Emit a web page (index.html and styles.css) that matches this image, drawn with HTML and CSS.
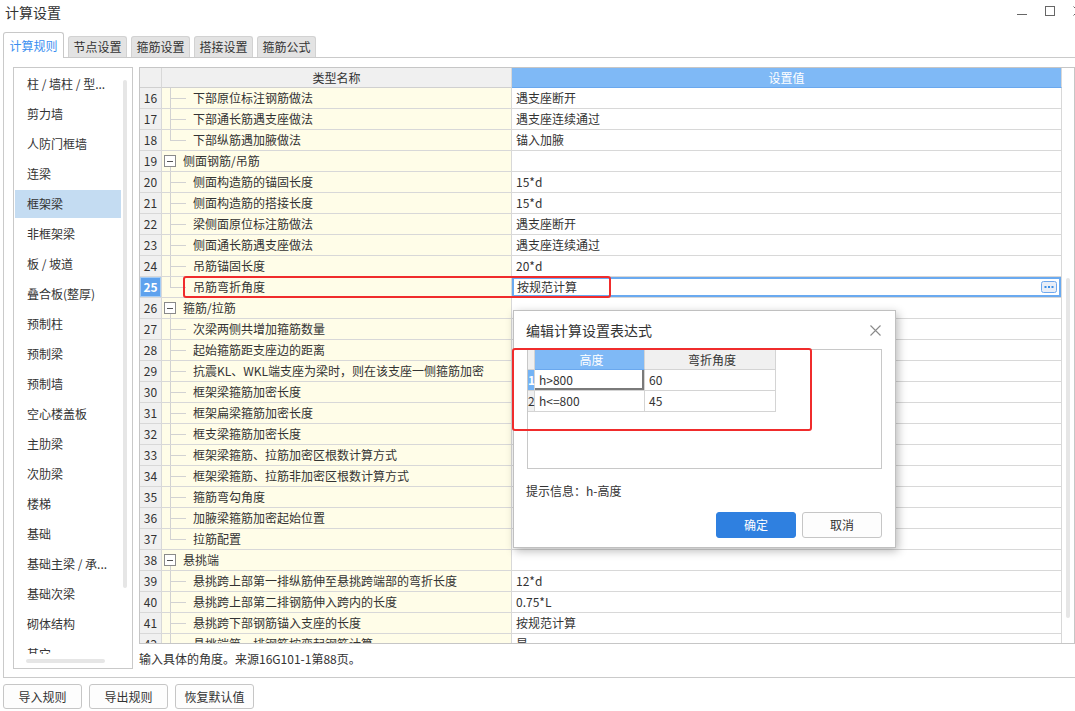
FILE: index.html
```html
<!DOCTYPE html>
<html lang="zh-CN">
<head>
<meta charset="utf-8">
<title>计算设置</title>
<link rel="stylesheet" href="styles.css">
</head>
<body>
<div class="app">
  <header class="titlebar">
    <span class="title">计算设置</span>
    <div class="winctl">
      <svg viewBox="0 0 10 10"><path d="M0 8.5H10" stroke="#666" stroke-width="1"/></svg>
      <svg viewBox="0 0 10 10"><rect x="0.5" y="0.5" width="9" height="9" fill="none" stroke="#666" stroke-width="1"/></svg>
      <svg viewBox="0 0 10 10"><path d="M0.5 0.5L9.5 9.5M9.5 0.5L0.5 9.5" stroke="#666" stroke-width="1"/></svg>
    </div>
  </header>

  <nav class="tabs">
    <div class="tab active">计算规则</div>
    <div class="tab">节点设置</div>
    <div class="tab">箍筋设置</div>
    <div class="tab">搭接设置</div>
    <div class="tab">箍筋公式</div>
  </nav>

  <main class="panel">
    <aside class="side">
      <div class="side-top">
        <ul class="side-list">
          <li>柱 / 墙柱 / 型...</li>
          <li>剪力墙</li>
          <li>人防门框墙</li>
          <li>连梁</li>
          <li class="sel">框架梁</li>
          <li>非框架梁</li>
          <li>板 / 坡道</li>
          <li>叠合板(整厚)</li>
          <li>预制柱</li>
          <li>预制梁</li>
          <li>预制墙</li>
          <li>空心楼盖板</li>
          <li>主肋梁</li>
          <li>次肋梁</li>
          <li>楼梯</li>
          <li>基础</li>
          <li>基础主梁 / 承...</li>
          <li>基础次梁</li>
          <li>砌体结构</li>
          <li>其它</li>
        </ul>
        <div class="side-vscroll"><div class="thumb-v"></div></div>
      </div>
      <div class="side-hscroll"><div class="thumb-h"></div></div>
    </aside>

    <section class="content">
      <div class="grid">
        <div class="gmain">
          <div class="row head">
            <div class="num"></div>
            <div class="name hcell">类型名称</div>
            <div class="val hcell hblue">设置值</div>
          </div>
          <div class="row"><div class="num">16</div><div class="name"><span class="tree"></span>下部原位标注钢筋做法</div><div class="val">遇支座断开</div></div>
          <div class="row"><div class="num">17</div><div class="name"><span class="tree"></span>下部通长筋遇支座做法</div><div class="val">遇支座连续通过</div></div>
          <div class="row"><div class="num">18</div><div class="name"><span class="tree last"></span>下部纵筋遇加腋做法</div><div class="val">锚入加腋</div></div>
          <div class="row"><div class="num">19</div><div class="name"><span class="tree group"><span class="box"></span></span>侧面钢筋/吊筋</div><div class="val"></div></div>
          <div class="row"><div class="num">20</div><div class="name"><span class="tree"></span>侧面构造筋的锚固长度</div><div class="val">15*d</div></div>
          <div class="row"><div class="num">21</div><div class="name"><span class="tree"></span>侧面构造筋的搭接长度</div><div class="val">15*d</div></div>
          <div class="row"><div class="num">22</div><div class="name"><span class="tree"></span>梁侧面原位标注筋做法</div><div class="val">遇支座断开</div></div>
          <div class="row"><div class="num">23</div><div class="name"><span class="tree"></span>侧面通长筋遇支座做法</div><div class="val">遇支座连续通过</div></div>
          <div class="row"><div class="num">24</div><div class="name"><span class="tree"></span>吊筋锚固长度</div><div class="val">20*d</div></div>
          <div class="row"><div class="num cur">25</div><div class="name"><span class="tree last"></span>吊筋弯折角度</div><div class="val editing"><span>按规范计算</span><span class="more"><svg viewBox="0 0 16 12"><rect x="0.5" y="0.5" width="15" height="11" rx="2" fill="#e9eef7" stroke="#6ea8ee"/><rect x="3.5" y="5" width="2" height="2" fill="#3a8ee6"/><rect x="7" y="5" width="2" height="2" fill="#3a8ee6"/><rect x="10.5" y="5" width="2" height="2" fill="#3a8ee6"/></svg></span></div></div>
          <div class="row"><div class="num">26</div><div class="name"><span class="tree group"><span class="box"></span></span>箍筋/拉筋</div><div class="val"></div></div>
          <div class="row"><div class="num">27</div><div class="name"><span class="tree"></span>次梁两侧共增加箍筋数量</div><div class="val"></div></div>
          <div class="row"><div class="num">28</div><div class="name"><span class="tree"></span>起始箍筋距支座边的距离</div><div class="val"></div></div>
          <div class="row"><div class="num">29</div><div class="name"><span class="tree"></span>抗震KL、WKL端支座为梁时，则在该支座一侧箍筋加密</div><div class="val"></div></div>
          <div class="row"><div class="num">30</div><div class="name"><span class="tree"></span>框架梁箍筋加密长度</div><div class="val"></div></div>
          <div class="row"><div class="num">31</div><div class="name"><span class="tree"></span>框架扁梁箍筋加密长度</div><div class="val"></div></div>
          <div class="row"><div class="num">32</div><div class="name"><span class="tree"></span>框支梁箍筋加密长度</div><div class="val"></div></div>
          <div class="row"><div class="num">33</div><div class="name"><span class="tree"></span>框架梁箍筋、拉筋加密区根数计算方式</div><div class="val"></div></div>
          <div class="row"><div class="num">34</div><div class="name"><span class="tree"></span>框架梁箍筋、拉筋非加密区根数计算方式</div><div class="val"></div></div>
          <div class="row"><div class="num">35</div><div class="name"><span class="tree"></span>箍筋弯勾角度</div><div class="val"></div></div>
          <div class="row"><div class="num">36</div><div class="name"><span class="tree"></span>加腋梁箍筋加密起始位置</div><div class="val"></div></div>
          <div class="row"><div class="num">37</div><div class="name"><span class="tree last"></span>拉筋配置</div><div class="val"></div></div>
          <div class="row"><div class="num">38</div><div class="name"><span class="tree group"><span class="box"></span></span>悬挑端</div><div class="val"></div></div>
          <div class="row"><div class="num">39</div><div class="name"><span class="tree"></span>悬挑跨上部第一排纵筋伸至悬挑跨端部的弯折长度</div><div class="val">12*d</div></div>
          <div class="row"><div class="num">40</div><div class="name"><span class="tree"></span>悬挑跨上部第二排钢筋伸入跨内的长度</div><div class="val">0.75*L</div></div>
          <div class="row"><div class="num">41</div><div class="name"><span class="tree"></span>悬挑跨下部钢筋锚入支座的长度</div><div class="val">按规范计算</div></div>
          <div class="row"><div class="num">42</div><div class="name"><span class="tree"></span>悬挑端第一排钢筋按弯起钢筋计算</div><div class="val">是</div></div>
        </div>
        <div class="vscroll"><div class="thumb-v2"></div></div>
      </div>
      <p class="desc">输入具体的角度。来源16G101-1第88页。</p>
    </section>
  </main>

  <footer class="actions">
    <button class="btn">导入规则</button>
    <button class="btn">导出规则</button>
    <button class="btn">恢复默认值</button>
  </footer>

  <div class="mark mark-row"></div>

  <div class="dialog">
    <div class="dlg-head">
      <span class="dlg-title">编辑计算设置表达式</span>
      <svg class="dlg-close" viewBox="0 0 11 11"><path d="M0.5 0.5L10.5 10.5M10.5 0.5L0.5 10.5" stroke="#8a8a8a" stroke-width="1.1"/></svg>
    </div>
    <div class="dlg-grid">
      <div class="eg-row eg-head"><div class="eg-num"></div><div class="eg-c hblue">高度</div><div class="eg-c">弯折角度</div></div>
      <div class="eg-row"><div class="eg-num sel">1</div><div class="eg-c cur">h&gt;800</div><div class="eg-c">60</div></div>
      <div class="eg-row"><div class="eg-num">2</div><div class="eg-c">h&lt;=800</div><div class="eg-c">45</div></div>
    </div>
    <p class="dlg-hint">提示信息：h-高度</p>
    <div class="dlg-actions">
      <button class="dbtn primary">确定</button>
      <button class="dbtn">取消</button>
    </div>
  </div>

  <div class="mark mark-dlg"></div>
</div>
</body>
</html>
```

FILE: styles.css
```css
* { box-sizing: border-box; }
html, body { margin: 0; padding: 0; }
body {
  width: 1075px;
  height: 711px;
  overflow: hidden;
  background: #fff;
  font-family: "Noto Sans CJK SC", "Microsoft YaHei", sans-serif;
  font-size: 12px;
  color: #333;
}
.app { position: relative; width: 1075px; height: 711px; }

/* title bar */
.titlebar { display: flex; align-items: flex-start; height: 32px; padding-left: 5px; }
.title { font-size: 14px; line-height: 24px; color: #333; }
.winctl { margin-left: auto; display: flex; gap: 18px; margin-top: 6px; margin-right: -8px; }
.winctl svg { display: block; width: 10px; height: 10px; flex: none; }

/* tabs */
.tabs { display: flex; align-items: flex-end; height: 25px; padding-left: 3px; gap: 4px; }
.tab {
  width: 59px; height: 21px;
  background: #e3e3e3;
  border: 1px solid #d2d2d2; border-bottom: none;
  border-radius: 3px 3px 0 0;
  text-align: center; line-height: 20px; color: #333;
}
.tab.active {
  width: 61px; height: 26px;
  background: #fff; border-color: #c8c8c8;
  color: #3a8ef0; line-height: 25px;
  margin-bottom: -1px; position: relative; z-index: 1;
}

/* main panel */
.panel {
  display: flex; gap: 6px;
  height: 621px;
  margin-left: 3px;
  border: 1px solid #cacaca; border-right: none;
  padding: 9px 0 8px 9px;
}

/* sidebar */
.side {
  width: 120px; flex: none;
  border: 1px solid #c9c9c9;
  display: flex; flex-direction: column;
}
.side-top { display: flex; height: 586px; overflow: hidden; }
.side-list {
  list-style: none; margin: 0; padding: 2px 0 0 0;
  width: 107px; flex: none;
}
.side-list li {
  height: 28px; line-height: 28px; margin: 0 0 2px 1px;
  padding-left: 12px; white-space: nowrap; color: #333;
}
.side-list li.sel { background: #c4dcf2; }
.side-vscroll { flex: 1; padding: 12px 0 0 2px; }
.thumb-v { width: 4px; height: 508px; background: #e6e6e6; border-radius: 2px; }
.side-hscroll { flex: 1; padding: 5px 0 0 12px; }
.thumb-h { width: 79px; height: 4px; background: #e6e6e6; border-radius: 2px; }

/* content / grid */
.content { display: flex; flex-direction: column; width: 936px; flex: none; }
.grid {
  display: flex;
  height: 578px;
  border: 1px solid #c6c6c6;
  overflow: hidden;
}
.gmain { width: 922px; flex: none; }
.row { display: grid; grid-template-columns: 22px 350px 550px; height: 21px; }
.row > div {
  border-bottom: 1px solid #d8d8d8;
  border-right: 1px solid #d8d8d8;
  line-height: 20px; white-space: nowrap; overflow: hidden;
}
.row .num { background: #f0f0f0; text-align: center; color: #333; }
.row .num.cur { background: #5ea2ee; color: #fff; font-weight: bold; box-shadow: inset 0 0 0 1px #a5cdf6; }
.row .name { background: #fffde8; display: flex; align-items: stretch; }
.row .val { background: #fff; padding-left: 4px; display: flex; align-items: center; }
.row .val.editing { box-shadow: inset 0 0 0 2px #6aaaf0; padding-left: 5px; }
.more { margin-left: auto; margin-right: 4px; display: block; width: 16px; height: 12px; }
.more svg { display: block; width: 16px; height: 12px; }

.row.head { height: 20px; }
.row.head > div { line-height: 19px; border-bottom-color: #d0d0d0; }
.row.head .name { background: #f0f0f0; justify-content: center; }
.row.head .val { background: #7fb9f6; color: #fff; justify-content: center; padding-left: 0; border-bottom-color: #6aa8ee; }

/* tree lines */
.tree {
  flex: none; width: 31px; height: 20px;
  background:
    linear-gradient(#d2d2d2, #d2d2d2) 8px 0 / 1px 100% no-repeat,
    linear-gradient(#d2d2d2, #d2d2d2) 8px 10px / 16px 1px no-repeat;
}
.tree.last {
  background:
    linear-gradient(#d2d2d2, #d2d2d2) 8px 0 / 1px 11px no-repeat,
    linear-gradient(#d2d2d2, #d2d2d2) 8px 10px / 16px 1px no-repeat;
}
.tree.group {
  width: 21px;
  background: linear-gradient(#d2d2d2, #d2d2d2) 8px 16px / 1px 4px no-repeat;
  padding: 4px 0 0 2px;
}
.box {
  display: block; width: 12px; height: 12px;
  border: 1px solid #8a8a8a; background: #fff;
  background-image: linear-gradient(#555, #555);
  background-size: 6px 1px; background-position: center; background-repeat: no-repeat;
}

.vscroll { flex: 1; padding: 210px 0 0 4px; }
.thumb-v2 { width: 4px; height: 340px; background: #e6e6e6; border-radius: 2px; }

.desc { margin: 5px 0 0 0; line-height: 20px; color: #333; }

/* footer */
.actions { display: flex; gap: 7px; padding: 6px 0 0 3px; }
.btn, .dbtn {
  font-family: inherit; font-size: 12px; color: #333;
  width: 79px; height: 25px;
  background: #fdfdfd; border: 1px solid #c6c6c6; border-radius: 3px;
  padding: 0; line-height: 23px;
}

/* annotation boxes */
.mark { position: absolute; border: 2px solid #f02c2c; border-radius: 3px; z-index: 5; pointer-events: none; }
.mark-row { left: 183px; top: 276px; width: 428px; height: 22px; }
.mark-dlg { left: 512px; top: 348px; width: 300px; height: 83px; }

/* dialog */
.dialog {
  position: absolute; left: 513px; top: 310px;
  width: 383px; height: 238px;
  background: #fff;
  border: 1px solid #c0c0c0;
  box-shadow: 2px 3px 9px rgba(0,0,0,0.28);
  padding: 0 13px 0 12px;
  z-index: 4;
}
.dlg-head { display: flex; align-items: center; height: 38px; }
.dlg-title { font-size: 14px; color: #333; line-height: 20px; }
.dlg-close { margin-left: auto; width: 11px; height: 11px; margin-right: 1px; display: block; }
.dlg-grid {
  margin-left: 1px;
  height: 120px;
  border: 1px solid #c8c8c8;
}
.eg-row { display: grid; grid-template-columns: 7px 110px 131px; height: 21px; }
.eg-row > div {
  border-right: 1px solid #d4d4d4; border-bottom: 1px solid #d4d4d4;
  line-height: 20px; white-space: nowrap;
}
.eg-head { height: 20px; }
.eg-head > div { line-height: 19px; background: #f0f0f0; text-align: center; }
.eg-head .hblue { background: #7fb9f6; color: #fff; border-bottom-color: #6aa8ee; }
.eg-num { background: #f0f0f0; text-align: center; font-size: 12px; overflow: visible; }
.eg-num.sel { background: #74b3f5; color: #fff; font-weight: bold; }
.eg-c { padding-left: 4px; }
.eg-c.cur { box-shadow: inset -2px -2px 0 #7a7a7a; }
.dlg-hint { margin: 12px 0 0 0; line-height: 20px; color: #333; }
.dlg-actions { display: flex; justify-content: flex-end; gap: 6px; margin-top: 11px; }
.dbtn { width: 80px; height: 26px; line-height: 24px; }
.dbtn.primary { background: #2f80e0; border-color: #2f80e0; color: #fff; }
```
